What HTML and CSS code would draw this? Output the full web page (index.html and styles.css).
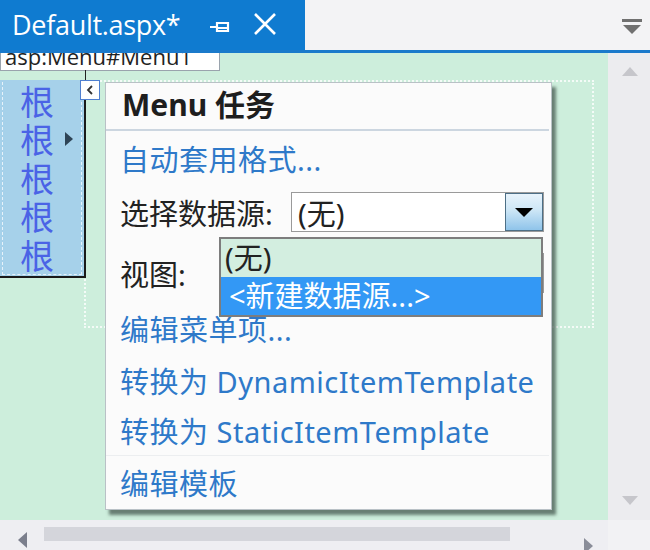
FILE: index.html
```html
<!DOCTYPE html>
<html lang="zh-CN">
  <head>
    <meta charset="UTF-8" />
    <title>Default.aspx</title>
    <link rel="stylesheet" href="styles.css">
  </head>
  <body>
    <!-- document tab strip -->
    <div class="tabbar">
      <div class="tab">
        <span class="tab-title">Default.aspx*</span>
        <svg class="tab-pin" width="22" height="14" viewBox="0 0 22 14">
          <path d="M1 7h7M8 2v10M8 3h11v8H8M8 8h11" fill="none" stroke="#fff" stroke-width="2.2"/>
        </svg>
        <svg class="tab-close" width="26" height="26" viewBox="0 0 26 26">
          <path d="M3 3l20 20M23 3L3 23" stroke="#fff" stroke-width="2.6"/>
        </svg>
      </div>
      <div class="tab-fill"></div>
      <svg class="tab-menu" width="22" height="18" viewBox="0 0 22 18">
        <rect x="1" y="2" width="20" height="3" fill="#707070"/>
        <path d="M2 8h18l-9 9z" fill="#707070"/>
      </svg>
    </div>

    <div class="workspace">
      <div class="canvas">
        <div class="tag-label"><span>asp:Menu#Menu1</span></div>
        <div class="tag-line"></div>
        <div class="control-bounds"></div>

        <div class="menu-ctrl">
          <div class="menu-inner">
            <div class="menu-item">根</div>
            <div class="menu-item">根<span class="menu-arrow"></span></div>
            <div class="menu-item">根</div>
            <div class="menu-item">根</div>
            <div class="menu-item">根</div>
          </div>
        </div>

        <div class="smart-tag">
          <svg width="12" height="14" viewBox="0 0 12 14">
            <path d="M8 3L4 7l4 4" fill="none" stroke="#333" stroke-width="1.8"/>
          </svg>
        </div>

        <!-- Menu tasks panel -->
        <div class="task-panel">
          <div class="task-header">Menu 任务</div>
          <div class="task-row r1"><a class="task-link">自动套用格式...</a></div>
          <div class="task-row r2">
            <span class="task-label">选择数据源:</span>
            <div class="combo">
              <span class="combo-text">(无)</span>
              <span class="combo-btn"><span class="combo-arrow"></span></span>
            </div>
          </div>
          <div class="task-row r3">
            <span class="task-label">视图:</span>
            <div class="combo">
              <span class="combo-text"></span>
              <span class="combo-btn"><span class="combo-arrow"></span></span>
            </div>
          </div>
          <div class="task-row r4"><a class="task-link">编辑菜单项...</a></div>
          <div class="task-row r5"><a class="task-link">转换为 DynamicItemTemplate</a></div>
          <div class="task-row r6"><a class="task-link">转换为 StaticItemTemplate</a></div>
          <div class="task-row r7"><a class="task-link">编辑模板</a></div>

          <div class="drop-list">
            <div class="drop-item">(无)</div>
            <div class="drop-item selected">&lt;新建数据源...&gt;</div>
          </div>
        </div>
      </div>

      <div class="vscroll">
        <span class="arrow-up"></span>
        <span class="arrow-down"></span>
      </div>

      <div class="hscroll">
        <span class="arrow-left"></span>
        <div class="hthumb"></div>
        <span class="arrow-right"></span>
      </div>
      <div class="corner"></div>
    </div>
  </body>
</html>
```

FILE: styles.css
```css
body {
  margin: 0;
  width: 650px;
  height: 550px;
  overflow: hidden;
  font-family: "Noto Sans", "Noto Sans CJK SC", sans-serif;
  background-color: #f2f2f4;
}

/* tab strip */
.tabbar {
  display: flex;
  height: 50px;
  border-bottom: 3px solid #1b7acb;
  background-color: #f3f3f5;
  position: relative;
  z-index: 3;
}

.tab {
  width: 305px;
  background-color: #0f7bd0;
  display: flex;
  align-items: center;
  color: #fff;
}

.tab-title {
  font-family: "Open Sans", "Noto Sans", sans-serif;
  font-size: 27px;
  margin-left: 12px;
  margin-top: -1px;
  letter-spacing: -0.3px;
}

.tab-pin {
  margin-left: 29px;
  margin-top: 3px;
}

.tab-close {
  margin-left: 21px;
  margin-top: -2px;
}

.tab-fill {
  flex: 1;
}

.tab-menu {
  margin: 17px 7px 0 0;
}

/* design surface + scrollbars */
.workspace {
  display: grid;
  grid-template-columns: 608px 42px;
  grid-template-rows: 467px 30px;
}

.canvas {
  position: relative;
  background-color: #cdeedc;
  overflow: hidden;
}

.tag-label {
  position: absolute;
  left: 0;
  top: -4px;
  width: 218px;
  height: 20px;
  background-color: #fff;
  border: 1px solid #9aa3ad;
  overflow: hidden;
  font-family: "Open Sans", "Noto Sans", sans-serif;
  font-size: 22px;
  line-height: 20px;
  color: #222;
}

.tag-label span {
  position: relative;
  top: -4px;
  left: 4px;
}

.tag-line {
  position: absolute;
  left: 85px;
  top: 17px;
  width: 1px;
  height: 10px;
  background-color: #222;
}

.control-bounds {
  position: absolute;
  left: 84px;
  top: 27px;
  width: 506px;
  height: 244px;
  border: 2px dotted #f4fbf7;
}

.menu-ctrl {
  position: absolute;
  left: 0;
  top: 27px;
  width: 84px;
  height: 196px;
  background-color: #a6d1ea;
  border-right: 2px solid #1a1a1a;
  border-bottom: 2px solid #1a1a1a;
}

.menu-inner {
  margin: 2px 2px 0 2px;
  height: 192px;
  border: 1px dashed #e6f2fa;
  border-top: none;
}

.menu-item {
  position: relative;
  height: 38.4px;
  line-height: 38px;
  padding-left: 17px;
  font-family: "Noto Sans CJK SC", sans-serif;
  font-size: 34px;
  color: #4a63e6;
}

.menu-arrow {
  position: absolute;
  left: 62px;
  top: 12px;
  border-left: 8px solid #2e4456;
  border-top: 7px solid transparent;
  border-bottom: 7px solid transparent;
}

.smart-tag {
  position: absolute;
  left: 80px;
  top: 27px;
  width: 18px;
  height: 18px;
  background-color: #fff;
  border: 1px solid #4f7fd0;
  display: flex;
  align-items: center;
  justify-content: center;
}

/* tasks panel */
.task-panel {
  position: absolute;
  left: 105px;
  top: 29px;
  width: 443px;
  height: 426px;
  background-color: #fbfbfb;
  border: 1px solid #b9c1c6;
  box-shadow: 4px 5px 3px rgba(70, 90, 80, 0.75);
  padding-right: 2px;
}

.task-header {
  height: 46px;
  line-height: 44px;
  padding-left: 16px;
  font-size: 30px;
  font-weight: bold;
  color: #1e1e1e;
  border-bottom: 2px solid #ccd6e0;
}

.task-row {
  display: flex;
  align-items: center;
  padding-left: 14px;
  font-size: 29px;
  color: #222;
}

.r1 { height: 53px; }
.r2 { height: 56px; }
.r3 { height: 62px; padding-top: 4px; box-sizing: border-box; }
.r4 { height: 52px; }
.r5 { height: 51px; }
.r6 { height: 50px; border-bottom: 1px solid #eceef0; }
.r7 { height: 52px; }

.task-link {
  color: #2e79c9;
  letter-spacing: 0.5px;
}

.combo {
  margin-left: auto;
  margin-right: 5px;
  width: 251px;
  height: 38px;
  background-color: #fff;
  border: 1px solid #9a9a9a;
  display: flex;
  align-items: center;
}

.combo-text {
  flex: 1;
  padding-left: 6px;
}

.combo-btn {
  width: 36px;
  height: 36px;
  border: 1px solid #4d6f86;
  background: linear-gradient(#e8f3fb, #cde6f6 45%, #8fc4ea);
  display: flex;
  align-items: center;
  justify-content: center;
}

.combo-arrow {
  border-top: 9px solid #000;
  border-left: 9px solid transparent;
  border-right: 9px solid transparent;
}

.drop-list {
  position: absolute;
  left: 113px;
  top: 154px;
  width: 320px;
  border: 2px solid #7d7d7d;
  background-color: #d3eee0;
}

.drop-item {
  height: 38px;
  line-height: 38px;
  padding-left: 4px;
  font-size: 29px;
  color: #222;
}

.drop-item.selected {
  background-color: #3398f5;
  color: #fff;
  padding-left: 8px;
}

.vscroll {
  position: relative;
  background-color: #ececef;
}

.arrow-up {
  position: absolute;
  left: 14px;
  top: 14px;
  border-bottom: 9px solid #c6c6cb;
  border-left: 8px solid transparent;
  border-right: 8px solid transparent;
}

.arrow-down {
  position: absolute;
  left: 14px;
  top: 443px;
  border-top: 9px solid #c6c6cb;
  border-left: 8px solid transparent;
  border-right: 8px solid transparent;
}

.hscroll {
  display: flex;
  align-items: center;
  background-color: #eeeef2;
  position: relative;
}

.arrow-left {
  position: absolute;
  left: 18px;
  bottom: 2px;
  border-right: 9px solid #7b7e8c;
  border-top: 8px solid transparent;
  border-bottom: 8px solid transparent;
}

.hthumb {
  margin-left: 44px;
  margin-top: -2px;
  width: 466px;
  height: 14px;
  background-color: #d4d5db;
}

.arrow-right {
  position: absolute;
  left: 584px;
  bottom: -4px;
  border-left: 9px solid #8a8d99;
  border-top: 8px solid transparent;
  border-bottom: 8px solid transparent;
}

.corner {
  background-color: #f2f2f4;
}
```
